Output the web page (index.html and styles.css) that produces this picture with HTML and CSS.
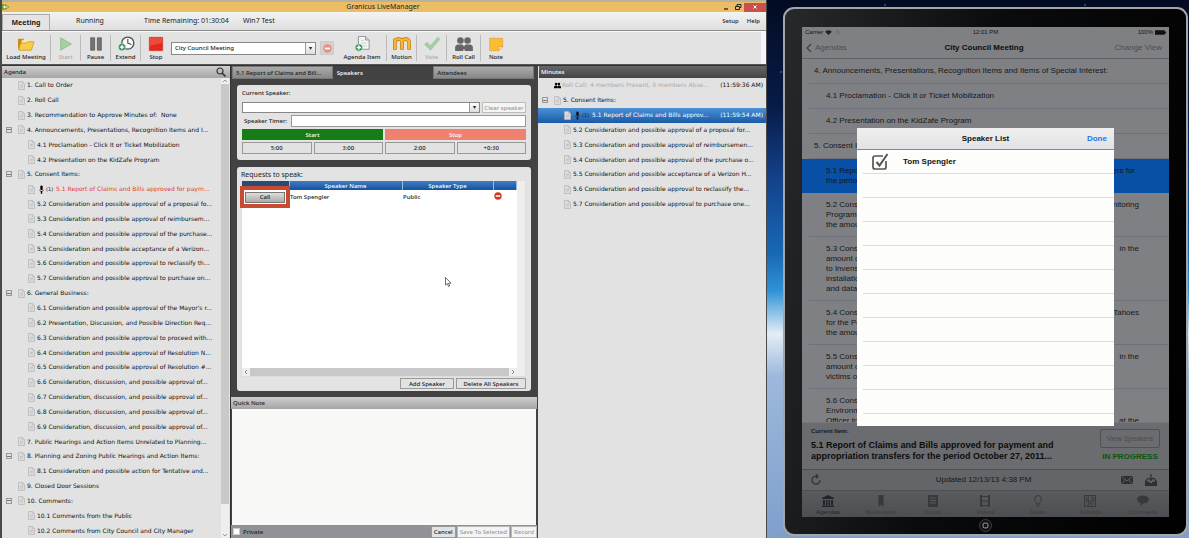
FILE: index.html
```html
<!DOCTYPE html>
<html lang="en">
<head>
<meta charset="utf-8">
<title>Granicus LiveManager</title>
<link rel="stylesheet" href="styles.css">
</head>
<body>
<svg class="defs" aria-hidden="true">
  <symbol id="doc" viewBox="0 0 7 9"><path d="M.5.5h4l2 2v6h-6z" fill="#dcdcdc" stroke="#b4b4b4" stroke-width=".7"/><path d="M4.300.6v2.200h2M2 4.500h3M2 6h3" fill="none" stroke="#b4b4b4" stroke-width=".6"/></symbol>
  <symbol id="mic" viewBox="0 0 5 9"><rect x="1.300" y=".5" width="2.400" height="4.600" rx="1.200"/><path d="M.3 3.800c0 3 4.400 3 4.400 0v1.500L3.200 6.800v1.900H1.800V6.800L.3 5.300z"/></symbol>
  <symbol id="people" viewBox="0 0 20 18"><circle cx="6" cy="5" r="3.700"/><circle cx="14" cy="5" r="3.700"/><path d="M0 17v-4c0-3 3-3.400 4-3.400h4l2 2 2-2h4c1 0 4 .4 4 3.400v4h-9l-1-3-1 3z"/></symbol>
  <symbol id="minus" viewBox="0 0 8 8"><circle cx="4" cy="4" r="3.700"/><path d="M1.800 3.200h4.400v1.600H1.800z" fill="#fff"/></symbol>
  <symbol id="plus" viewBox="0 0 8 8"><circle cx="4" cy="4" r="3.600" fill="#2c8a55" stroke="#e6f2ea" stroke-width=".5"/><path d="M4 1.800v4.400M1.800 4h4.400" stroke="#fff" stroke-width="1.400"/></symbol>
</svg>

<main class="desktop">
  <section class="window">
    <header class="titlebar">
      <svg class="logo" viewBox="0 0 8 8"><path d="M0 1l4 .5L7.500 4 4 6.500 0 7z" fill="#7aa52a"/><path d="M1 4l2-1.500v1h2.500v1H3v1z" fill="#fff"/></svg>
      <h1>Granicus LiveManager</h1>
      <div class="winbtns">
        <button aria-label="Minimize"><svg viewBox="0 0 8 8"><path d="M2 6h4" stroke="#222" stroke-width="1.300"/></svg></button>
        <button aria-label="Restore"><svg viewBox="0 0 8 8"><path d="M1.500 3.500h4v3h-4zM3 3V1.500h4v3H5.800" fill="none" stroke="#222"/></svg></button>
        <button class="close" aria-label="Close"><svg viewBox="0 0 8 8"><path d="M2.500 2.500l3 3m0-3l-3 3" stroke="#fff"/></svg></button>
      </div>
    </header>

    <nav class="menubar">
      <button class="mtab active">Meeting</button>
      <button class="mtab">Running</button>
      <span class="remaining">Time Remaining: 01:30:04</span>
      <span class="host">Win7 Test</span>
      <a href="#">Setup</a><a href="#">Help</a>
    </nav>

    <div class="toolbar">
      <button class="tool wide"><svg viewBox="0 0 20 18"><path d="M1 3h6l1 2h8v4H4L1 16z" fill="#c98d15"/><path d="M5 5l11-2v5H5z" fill="#f7e9b8"/><path d="M4 8h6l2-1.500h7L16 16H2z" fill="#f9cd45" stroke="#c88f18" stroke-width=".8"/></svg>Load Meeting</button>
      <button class="tool off"><svg viewBox="0 0 20 18"><path d="M4 2l12 7-12 7z" fill="#a5d0a4" stroke="#8dbd8c"/></svg>Start</button>
      <button class="tool"><svg viewBox="0 0 20 18"><path d="M4 2h4.500v14H4zM11.500 2H16v14h-4.500z" fill="#737373" stroke="#555" stroke-width=".8"/></svg>Pause</button>
      <button class="tool"><svg viewBox="0 0 20 18"><circle cx="12" cy="8" r="6.800" fill="#f7faf7" stroke="#455349" stroke-width="1.500"/><path d="M12 3.500V8l4 1.500" fill="none" stroke="#455349" stroke-width="1.200"/><use href="#plus" x="1" y="8" width="9" height="9"/></svg>Extend</button>
      <button class="tool nosep"><svg viewBox="0 0 20 18"><path d="M2.500 1.500h15v15h-15z" fill="#e3281c" stroke="#c93a30" stroke-width=".8"/><path d="M3 2h14v6L3 11z" fill="#ee4a3c"/></svg>Stop</button>
      <div class="combo meeting"><select aria-label="Meeting"><option>City Council Meeting</option></select></div>
      <button class="remove" aria-label="Remove meeting"><svg viewBox="0 0 8 8"><use href="#minus" fill="#e58d84"/></svg></button>
      <button class="tool wide"><svg viewBox="0 0 20 18"><path d="M6 .5h8l4 4V15H6z" fill="#f4f4f4" stroke="#8c8c8c"/><path d="M14 .5v4h4" fill="#d5d5d5" stroke="#8c8c8c"/><path d="M9 5h3M9 8h6M9 11h6" stroke="#ccc"/><use href="#plus" x="2" y="8.500" width="9" height="9"/></svg>Agenda Item</button>
      <button class="tool"><svg viewBox="0 0 20 18"><path d="M2 15.500V3M2 6q.5-2.500 4-2.500Q10 3.500 10 7v8.500M10 7q.3-3.500 4-3.500T18 7v8.500" fill="none" stroke="#b9740e" stroke-width="4"/><path d="M2 15V3.500M2 6q.5-2.500 4-2.500Q10 3.500 10 7v8M10 7q.3-3.500 4-3.500T18 7v8" fill="none" stroke="#fab52c" stroke-width="2.600"/></svg>Motion</button>
      <button class="tool off"><svg viewBox="0 0 20 18"><path d="M1.500 9.500L4.500 7l3.500 4 8.500-9.500L19 3.500 8.500 16z" fill="#a4cfa5" stroke="#90c091" stroke-width=".6"/></svg>Vote</button>
      <button class="tool roomy"><svg viewBox="0 0 20 18" fill="#666"><use href="#people"/></svg>Roll Call</button>
      <button class="tool nosep"><svg viewBox="0 0 20 18"><path d="M3 2.500h14.500V12L13 16.500H3z" fill="#fbbd35" stroke="#e39d20" stroke-width=".7"/><path d="M17.500 12H13v4.500z" fill="#fff0b0" stroke="#d28c1c" stroke-width=".6"/></svg>Note</button>
      <div class="overflow"></div>
    </div>

    <div class="columns">
      <section class="agenda">
        <h2 class="bar light">Agenda <svg class="find" viewBox="0 0 10 10"><circle cx="4" cy="4" r="3" fill="none" stroke="#333" stroke-width="1.200"/><path d="M6.200 6.200L9.500 9.500" stroke="#333" stroke-width="1.600"/></svg></h2>
        <div class="scrollarea">
          <ul class="tree">
            <li><svg><use href="#doc"/></svg><span>1. Call to Order</span></li>
            <li><svg><use href="#doc"/></svg><span>2. Roll Call</span></li>
            <li><svg><use href="#doc"/></svg><span>3. Recommendation to Approve Minutes of: &nbsp;None</span></li>
            <li class="open"><svg><use href="#doc"/></svg><span>4. Announcements, Presentations, Recognition Items and I...</span></li>
            <li class="sub"><svg><use href="#doc"/></svg><span>4.1 Proclamation - Click It or Ticket Mobilization</span></li>
            <li class="sub"><svg><use href="#doc"/></svg><span>4.2 Presentation on the KidZafe Program</span></li>
            <li class="open"><svg><use href="#doc"/></svg><span>5. Consent Items:</span></li>
            <li class="sub live"><svg><use href="#doc"/></svg><svg class="mic"><use href="#mic"/></svg><small>(1)</small><span>5.1 Report of Claims and Bills approved for paym...</span></li>
            <li class="sub"><svg><use href="#doc"/></svg><span>5.2 Consideration and possible approval of a proposal fo...</span></li>
            <li class="sub"><svg><use href="#doc"/></svg><span>5.3 Consideration and possible approval of reimbursem...</span></li>
            <li class="sub"><svg><use href="#doc"/></svg><span>5.4 Consideration and possible approval of the purchase...</span></li>
            <li class="sub"><svg><use href="#doc"/></svg><span>5.5 Consideration and possible acceptance of a Verizon...</span></li>
            <li class="sub"><svg><use href="#doc"/></svg><span>5.6 Consideration and possible approval to reclassify th...</span></li>
            <li class="sub"><svg><use href="#doc"/></svg><span>5.7 Consideration and possible approval to purchase on...</span></li>
            <li class="open"><svg><use href="#doc"/></svg><span>6. General Business:</span></li>
            <li class="sub"><svg><use href="#doc"/></svg><span>6.1 Consideration and possible approval of the Mayor's r...</span></li>
            <li class="sub"><svg><use href="#doc"/></svg><span>6.2 Presentation, Discussion, and Possible Direction Req...</span></li>
            <li class="sub"><svg><use href="#doc"/></svg><span>6.3 Consideration and possible approval to proceed with...</span></li>
            <li class="sub"><svg><use href="#doc"/></svg><span>6.4 Consideration and possible approval of Resolution N...</span></li>
            <li class="sub"><svg><use href="#doc"/></svg><span>6.5 Consideration and possible approval of Resolution #...</span></li>
            <li class="sub"><svg><use href="#doc"/></svg><span>6.6 Consideration, discussion, and possible approval of...</span></li>
            <li class="sub"><svg><use href="#doc"/></svg><span>6.7 Consideration, discussion, and possible approval of...</span></li>
            <li class="sub"><svg><use href="#doc"/></svg><span>6.8 Consideration, discussion, and possible approval of...</span></li>
            <li class="sub"><svg><use href="#doc"/></svg><span>6.9 Consideration, discussion, and possible approval of...</span></li>
            <li><svg><use href="#doc"/></svg><span>7. Public Hearings and Action Items Unrelated to Planning...</span></li>
            <li class="open"><svg><use href="#doc"/></svg><span>8. Planning and Zoning Public Hearings and Action Items:</span></li>
            <li class="sub"><svg><use href="#doc"/></svg><span>8.1 Consideration and possible action for Tentative and...</span></li>
            <li><svg><use href="#doc"/></svg><span>9. Closed Door Sessions</span></li>
            <li class="open"><svg><use href="#doc"/></svg><span>10. Comments:</span></li>
            <li class="sub"><svg><use href="#doc"/></svg><span>10.1 Comments from the Public</span></li>
            <li class="sub"><svg><use href="#doc"/></svg><span>10.2 Comments from City Council and City Manager</span></li>
          </ul>
          <div class="vscroll"><svg viewBox="0 0 8 6"><path d="M2 4l2-2 2 2" fill="none" stroke="#999"/></svg><i></i><svg class="down" viewBox="0 0 8 6"><path d="M2 2l2 2 2-2" fill="none" stroke="#999"/></svg></div>
        </div>
      </section>

      <section class="middle">
        <div class="tabs">
          <button>5.1 Report of Claims and Bill...</button>
          <button class="active">Speakers</button>
          <button>Attendees</button>
        </div>
        <div class="panels">
          <form class="panel speaker">
            <label for="current">Current Speaker:</label>
            <div class="line">
              <div class="combo"><select id="current"><option></option></select></div>
              <button type="button" class="btn faded">Clear speaker</button>
            </div>
            <div class="line timer"><label for="timer">Speaker Timer:</label><input id="timer" type="text"></div>
            <div class="halves"><button type="button" class="go">Start</button><button type="button" class="halt">Stop</button></div>
            <div class="quarters"><button type="button" class="btn">5:00</button><button type="button" class="btn">3:00</button><button type="button" class="btn">2:00</button><button type="button" class="btn">+0:30</button></div>
          </form>
          <div class="panel requests">
            <h3>Requests to speak:</h3>
            <div class="grid">
              <div class="sheet">
                <table>
                  <colgroup><col class="c1"><col class="c2"><col class="c3"><col></colgroup>
                  <thead><tr><th></th><th>Speaker Name</th><th>Speaker Type</th><th></th></tr></thead>
                  <tbody><tr><td class="callcell"><button class="call">Call</button></td><td>Tom Spengler</td><td>Public</td><td class="del"><button aria-label="Remove Tom Spengler"><svg viewBox="0 0 8 8"><use href="#minus" fill="#d8351f"/></svg></button></td></tr></tbody>
                </table>
                <div class="hscroll"><svg viewBox="0 0 8 8"><path d="M5 2L3 4l2 2" fill="none" stroke="#888"/></svg><i></i><svg viewBox="0 0 8 8"><path d="M3 2l2 2-2 2" fill="none" stroke="#888"/></svg></div>
              </div>
              <div class="rail"></div>
            </div>
            <div class="actions"><button class="btn add">Add Speaker</button><button class="btn all">Delete All Speakers</button></div>
          </div>
        </div>
        <h2 class="bar light"><label for="note">Quick Note</label></h2>
        <textarea id="note"></textarea>
        <footer class="notebar">
          <input type="checkbox" id="private"><label for="private">Private</label>
          <button class="btn">Cancel</button><button class="btn faded">Save To Selected</button><button class="btn faded">Record</button>
        </footer>
        <svg class="cursor" viewBox="0 0 7 10"><path d="M.5.5v7.500l1.800-1.500 1.200 3 1.200-.5-1.200-2.800H6z" fill="#fff" stroke="#333" stroke-width=".7"/></svg>
      </section>

      <section class="minutes">
        <h2 class="bar dark">Minutes</h2>
        <ul class="tree">
          <li class="roll"><svg><use href="#people"/></svg><span>Roll Call: 4 members Present, 0 members Abse...</span><time>(11:59:36 AM)</time></li>
          <li class="open"><svg><use href="#doc"/></svg><span>5. Consent Items:</span></li>
          <li class="sub selected"><svg><use href="#doc"/></svg><svg class="mic"><use href="#mic"/></svg><small>(1)</small><span>5.1 Report of Claims and Bills approv...</span><time>(11:59:54 AM)</time></li>
          <li class="sub"><svg><use href="#doc"/></svg><span>5.2 Consideration and possible approval of a proposal for...</span></li>
          <li class="sub"><svg><use href="#doc"/></svg><span>5.3 Consideration and possible approval of reimbursemen...</span></li>
          <li class="sub"><svg><use href="#doc"/></svg><span>5.4 Consideration and possible approval of the purchase o...</span></li>
          <li class="sub"><svg><use href="#doc"/></svg><span>5.5 Consideration and possible acceptance of a Verizon H...</span></li>
          <li class="sub"><svg><use href="#doc"/></svg><span>5.6 Consideration and possible approval to reclassify the...</span></li>
          <li class="sub"><svg><use href="#doc"/></svg><span>5.7 Consideration and possible approval to purchase one...</span></li>
        </ul>
      </section>
    </div>
  </section>

  <section class="space">
    <div class="tablet">
      <div class="screen">
        <div class="status">
          <span class="carrier">Carrier <svg viewBox="0 0 8 6"><path d="M0 2q4-3.500 8 0L4 6z" fill="#222"/></svg><svg viewBox="0 0 6 6"><circle cx="3" cy="3" r="2" fill="none" stroke="#555" stroke-dasharray="1 1"/></svg></span>
          <span>12:01 PM</span>
          <span class="power">100% <svg viewBox="0 0 12 5"><path d="M0 0h10.500v1.500H12v2h-1.500V5H0z" fill="#111"/></svg></span>
        </div>
        <div class="nav"><button class="back"><svg viewBox="0 0 6 10"><path d="M5 1L1 5l4 4" fill="none" stroke="#3f4044" stroke-width="1.300"/></svg>Agendas</button><strong>City Council Meeting</strong><button class="view">Change View</button></div>
        <ul class="items">
          <li class="top">4. Announcements, Presentations, Recognition Items and Items of Special Interest:</li>
          <li>4.1 Proclamation - Click It or Ticket Mobilization</li>
          <li>4.2 Presentation on the KidZafe Program</li>
          <li class="top">5. Consent Items:</li>
          <li class="current"><p><span>5.1 Report of Claims</span><span>transfers for</span></p><p>the period</p></li>
          <li><p><span>5.2 Consideration</span><span>Monitoring</span></p><p>Program in</p><p>the amount</p></li>
          <li><p><span>5.3 Consideration</span><span>in the</span></p><p>amount of</p><p>to Invensys</p><p>installation</p><p>and data</p></li>
          <li><p><span>5.4 Consideration</span><span>Tahoes</span></p><p>for the Police</p><p>the amount</p></li>
          <li><p><span>5.5 Consideration</span><span>in the</span></p><p>amount of</p><p>victims of</p></li>
          <li><p><span>5.6 Consideration</span></p><p>Environmental</p><p><span>Officer to</span><span>at the</span></p></li>
        </ul>
        <div class="now">
          <div class="what"><small>Current Item:</small><strong>5.1 Report of Claims and Bills approved for payment and appropriation transfers for the period October 27, 2011...</strong></div>
          <div class="state"><button>View Speakers</button><b>IN PROGRESS</b></div>
        </div>
        <div class="sync">
          <button aria-label="Refresh"><svg viewBox="0 0 12 12"><path d="M10 6a4 4 0 1 1-3-3.800M6 0l2 2.200L6 4.500" fill="none" stroke="#303134" stroke-width="1.200"/></svg></button>
          <span>Updated 12/13/13 4:38 PM</span>
          <div><button aria-label="Mail"><svg viewBox="0 0 12 12"><path d="M0 2h12v8H0z" fill="#2e2f32"/><path d="M.5 2.500L6 7l5.500-4.500M.5 9.500l4-3.500m7 3.500l-4-3.500" fill="none" stroke="#6a6b6e" stroke-width=".8"/></svg></button><button aria-label="Download"><svg viewBox="0 0 12 12"><path d="M0 7l2.500-3H4v1H3L1.500 7.500H4l1 1.500h2l1-1.500h2.500L9 5H8V4h1.500L12 7v5H0z" fill="#2e2f32"/><path d="M6 0v6M3.800 4L6 6.300 8.200 4" fill="none" stroke="#2e2f32" stroke-width="1.200"/></svg></button></div>
        </div>
        <nav class="tabbar">
          <a href="#" class="on"><svg viewBox="0 0 12 12"><path d="M6 0l6 3v1H0V3zM1 5h2v5H1zM4 5h1.500v5H4zM6.500 5H8v5H6.500zM9 5h2v5H9zM0 10.500h12V12H0z"/></svg>Agendas</a>
          <a href="#"><svg viewBox="0 0 12 12"><path d="M3.500 0h5v12L6 9.500 3.500 12z"/></svg>Bookmarks</a>
          <a href="#"><svg viewBox="0 0 12 12"><path d="M1 0h10v12H1z"/><path d="M3 3h6M3 5.500h6M3 8h6" stroke="#5a5b5e"/></svg>Notes</a>
          <a href="#"><svg viewBox="0 0 12 12"><path d="M1 0h2v12H1zM9 0h2v12H9zM3 1h6v1H3zM3 5.500h6v1H3zM3 10h6v1H3z"/></svg>Videos</a>
          <a href="#"><svg viewBox="0 0 12 12"><path d="M4.500 9C4.500 7 2.500 6.500 2.500 4a3.500 3.500 0 0 1 7 0c0 2.500-2 3-2 5zM4.500 11h3" fill="none" stroke="#38393c"/></svg>Ideas</a>
          <a href="#"><svg viewBox="0 0 12 12"><path d="M.5.5h11v11H.5zM4.200 1v10M8 1v10" fill="none" stroke="#38393c"/><path d="M2 2h1v5H2zM5.500 5h1v5h-1zM9.300 2h1v5h-1z"/></svg>Settings</a>
          <a href="#"><svg viewBox="0 0 12 12"><ellipse cx="6" cy="4.500" rx="6" ry="4"/><path d="M4 8l-1 3 4-3z"/></svg>Comments</a>
        </nav>
        <div class="dialog" role="dialog" aria-label="Speaker List">
          <header><strong>Speaker List</strong><button>Done</button></header>
          <ul>
            <li><label><input type="checkbox" checked><svg viewBox="0 0 18 18"><path d="M12 3H4Q2 3 2 5v9q0 2 2 2h9q2 0 2-2V8" fill="none" stroke="#555" stroke-width="1.700"/><path d="M5.500 9l3 3.500L16.500 1" fill="none" stroke="#555" stroke-width="2"/></svg>Tom Spengler</label></li>
            <li></li><li></li><li></li><li></li><li></li><li></li><li></li><li></li><li></li><li></li>
          </ul>
        </div>
      </div>
      <button class="home" aria-label="Home"><svg viewBox="0 0 12 12"><circle cx="6" cy="6" r="5.500" fill="#111" stroke="#555" stroke-width=".7"/><rect x="3.800" y="3.800" width="4.400" height="4.400" rx="1" fill="none" stroke="#aaa" stroke-width=".9"/></svg></button>
    </div>
  </section>
</main>
</body>
</html>
```
FILE: styles.css
```css
*, *::before, *::after { box-sizing: border-box; }
body, h1, h2, h3, ul, p { margin: 0; padding: 0; }
ul { list-style: none; }
body { font: 500 6px/8px "Noto Sans", sans-serif; color: #222; }
button, input, select, textarea { font: inherit; color: inherit; margin: 0; padding: 0; border: 0; border-radius: 0; background: none; }
a { color: inherit; text-decoration: none; }
h1, h2, h3 { font: inherit; }
svg { display: block; flex: none; }
.defs { position: absolute; width: 0; height: 0; }

.desktop { display: grid; grid-template-columns: 767fr 422fr; height: 100vh; min-height: 538px; overflow: hidden; background: #06102c; }
.window { display: flex; flex-direction: column; min-width: 0; min-height: 0; padding: 0 1px 0 2px; background: #4a4a4a; }

.titlebar { display: flex; align-items: center; height: 12px; flex: none; border-top: 2px solid #b7b29f; background: #edbd65; }
.logo { width: 8px; height: 8px; }
.titlebar h1 { flex: 1; padding-left: 36px; text-align: center; font-size: 7px; font-weight: 400; }
.winbtns { display: flex; }
.winbtns button { display: grid; place-items: center; width: 12px; height: 9px; }
.winbtns .close { width: 22px; background: #cb4f4c; }
.winbtns svg { width: 8px; height: 8px; }

.menubar { display: flex; align-items: center; height: 19px; flex: none; background: linear-gradient(#f3f3f3, #dedede); border-bottom: 1px solid #8b8b8b; font-size: 7px; font-weight: 400; }
.mtab { width: 48px; align-self: stretch; }
.mtab.active { margin-top: 2px; font-weight: 700; border: 1px solid #aaa; border-bottom: 0; background: #e4e4e4; }
.mtab + .mtab { width: 80px; }
.remaining { width: 99px; margin-left: 14px; }
.host { flex: 1; }
.menubar a { margin-right: 8px; font-size: 6px; font-weight: 500; }
.menubar a:last-child { margin-right: 6px; }

.toolbar { display: flex; align-items: center; height: 34px; flex: none; background: #e3e3e3; border-top: 1px solid #f8f8f8; border-bottom: 1px solid #555; }
.tool { display: flex; flex-direction: column; align-items: center; justify-content: center; gap: 1px; width: 30px; height: 26px; border-right: 1px solid #bbb; white-space: nowrap; }
.tool.wide { width: 49px; }
.tool.roomy { width: 34px; }
.tool.nosep { border-right: 0; }
.tool.off { color: #aaa; }
.tool svg { width: 18px; height: 16px; }
.combo { position: relative; display: flex; height: 13px; border: 1px solid #888; background: #fff; }
.combo select { flex: 1; min-width: 0; padding-left: 3px; appearance: none; outline: 0; }
.combo::after { content: "▾"; position: absolute; right: 0; top: 0; bottom: 0; width: 10px; border-left: 1px solid #999; background: linear-gradient(#fff, #ddd); color: #222; text-align: center; line-height: 11px; pointer-events: none; }
.meeting { width: 145px; }
.remove { display: grid; place-items: center; width: 14px; height: 14px; margin: 0 4px; border: 1px solid #ccc; background: #d5d0d0; }
.remove svg { width: 9px; height: 9px; }
.overflow { align-self: stretch; width: 5px; margin-left: auto; background: #f2f6fb; }

.columns { flex: 1; min-height: 0; display: grid; grid-template-columns: 228fr 308fr 228fr; border-top: 1px solid #333; }
.bar { display: flex; align-items: center; justify-content: space-between; height: 12px; flex: none; padding: 0 2px; }
.bar.light { background: linear-gradient(#cfcfcf, #a5a5a5); }
.bar.dark { background: linear-gradient(#666, #444); color: #fff; }
.find { width: 10px; height: 10px; margin-right: 2px; }

.agenda, .minutes { display: flex; flex-direction: column; min-width: 0; min-height: 0; background: #e2e2e2; }
.scrollarea { display: flex; flex: 1; min-height: 0; }
.tree { flex: 1; min-width: 0; min-height: 0; display: grid; grid-template-rows: repeat(31, minmax(0, 1fr)); font-family: "DejaVu Sans", Verdana, sans-serif; font-weight: 400; color: #111; }
.tree li { display: flex; align-items: center; padding-left: 16px; white-space: nowrap; overflow: hidden; }
.tree li.sub { padding-left: 26px; }
.tree svg { width: 7px; height: 9px; margin-right: 2px; }
.tree .mic { width: 5px; margin-left: 2px; }
.tree small { font-size: 5px; margin-right: 3px; }
.tree .open { padding-left: 4px; }
.tree .open::before { content: ""; width: 6px; height: 6px; margin-right: 6px; flex: none; border: 1px solid #999; background: linear-gradient(#777, #777) center / 100% 1px no-repeat; }
.live span { color: #e23a33; }
.vscroll { display: flex; flex-direction: column; width: 8px; margin-right: 1px; background: #eee; }
.vscroll i { flex: 1; background: #c9c9c9; }
.vscroll svg { width: 8px; height: 6px; }
.vscroll .down { margin-top: 28px; }

.minutes .bar { margin-left: 1px; }
.minutes .roll svg { margin-right: 1px; }
.minutes .roll span { color: #aaa; }
.minutes time { margin-left: auto; padding-right: 3px; }
.minutes .selected { background: linear-gradient(#4a90d6, #1a5ba8); color: #fff; }
.selected small { color: #123; }
.selected .mic { fill: #111; }

.middle { position: relative; display: flex; flex-direction: column; min-width: 0; min-height: 0; background: #424242; border-left: 1px solid #333; border-right: 1px solid #444; }
.tabs { display: grid; grid-template-columns: repeat(3, 1fr); height: 13px; flex: none; padding: 0 3px 0 1px; }
.tabs button { padding-left: 3px; text-align: left; border: 1px solid #777; background: linear-gradient(#aaa, #888); white-space: nowrap; }
.tabs .active { border-color: #424242; background: #424242; color: #fff; }
.panels { flex: 1; min-height: 0; display: flex; flex-direction: column; gap: 7px; padding: 6px 6px; }
.panel { display: flex; flex-direction: column; padding: 4px 5px; border-radius: 3px; background: #e3e3e3; }
.speaker { height: 75px; gap: 2px; }
.line { display: flex; gap: 2px; }
.line .combo { flex: 1; height: 11px; }
.line .combo::after { line-height: 9px; }
.btn { height: 12px; padding: 0 3px; border: 1px solid #999; background: #e2e2e2; white-space: nowrap; }
.btn.faded { color: #999; border-color: #bbb; background: #f4f4f4; }
.line .btn { width: 44px; height: 11px; padding: 0; }
.speaker > label { height: 11px; }
.timer { padding-left: 2px; gap: 4px; align-items: center; }
.timer input { flex: 1; min-width: 0; height: 12px; border: 1px solid #999; background: #fff; }
.halves { display: grid; grid-template-columns: 1fr 1fr; gap: 2px; color: #fff; }
.halves button { height: 11px; }
.go { background: #167d16; }
.halt { background: #f0816f; }
.quarters { display: grid; grid-template-columns: repeat(4, 1fr); gap: 2px; }
.requests { flex: 1; min-height: 0; padding: 4px 5px 2px 4px; }
.requests h3 { font-size: 7px; height: 10px; line-height: 8px; font-weight: 400; }
.grid { flex: 1; min-height: 0; display: flex; background: #fff; border: 1px solid #ddd; border-top: 0; }
.sheet { flex: 1; display: flex; flex-direction: column; justify-content: space-between; }
.rail { width: 8px; background: #eee; }
table { width: 100%; table-layout: fixed; border-collapse: collapse; }
col.c1 { width: 47px; } col.c2 { width: 113px; } col.c3 { width: 91px; }
th { height: 9px; padding: 0; border-right: 1px solid #9ab8dc; background: linear-gradient(#3d7dc4, #16529d); color: #fff; font-weight: 500; line-height: 8px; }
th:first-child { background: #2b4b74; }
td { height: 14px; padding: 0 1px; }
.callcell { position: relative; }
.callcell::after { content: ""; position: absolute; inset: -4px -1px -4px -2px; border: 4px solid #c84a30; pointer-events: none; }
.call { display: block; width: 40px; height: 11px; margin-left: 2px; border: 1px solid #777; background: linear-gradient(#ddd, #aaa); }
.del svg { width: 8px; height: 8px; }
.hscroll { display: flex; height: 8px; background: #eee; }
.hscroll i { flex: 1; background: #c8c8c8; }
.hscroll svg { width: 8px; height: 8px; }
.actions { display: flex; justify-content: flex-end; gap: 2px; padding-top: 1px; }
.actions .btn { height: 11px; }
.btn.add { width: 54px; } .btn.all { width: 70px; }
textarea { height: 116px; flex: none; margin: 0 1px; resize: none; background: #f8f8f7; }
.notebar { display: flex; align-items: center; gap: 1px; height: 13px; flex: none; padding-left: 2px; background: #929296; }
.notebar input { appearance: none; width: 7px; height: 7px; border: 1px solid #ccc; background: #fff; }
.notebar label { flex: 1; padding-left: 2px; }
.notebar .btn { padding: 0 2px; }
.cursor { position: absolute; left: 70%; top: 211px; width: 7px; height: 10px; }

.space { display: flex; padding: 7px 1px 2px 16px; min-height: 0; font-family: "Liberation Sans", Arial, sans-serif; font-weight: 400; color: #161719; background:
  radial-gradient(1px 1px at 118px 5px, #9bf, transparent), radial-gradient(1px 1px at 318px 5px, #9bf, transparent), radial-gradient(1px 1px at 14px 72px, #9bf, transparent),
  linear-gradient(#030b22 0, #081c48 20%, #14418a 33%, #1868b4 47%, #2f92d6 54%, #e2edf4 62%, #9cb8dc 70%, #7f9fcb 100%); }
.tablet { flex: 1; min-width: 0; display: flex; flex-direction: column; padding: 18px 17px 0; border: 2px solid #a4a6ab; border-radius: 11px; background: linear-gradient(100deg, #28292b, #0a0b0c 45%, #000); }
.screen { position: relative; flex: 1; min-height: 0; display: flex; flex-direction: column; background: #7f8083; }
.home { display: grid; place-items: center; height: 17px; flex: none; }
.home svg { width: 13px; height: 13px; }
.status { display: grid; grid-template-columns: 1fr auto 1fr; align-items: center; height: 10px; padding: 0 3px; }
.status svg { width: 7px; height: 5px; }
.status .carrier, .status .power { display: flex; align-items: center; gap: 2px; }
.status .power { justify-content: flex-end; }
.status .power svg { width: 11px; }
.nav { display: grid; grid-template-columns: 1fr auto 1fr; align-items: center; height: 22px; padding: 0 7px 0 4px; border-bottom: 1px solid #616267; font-size: 8px; line-height: 10px; }
.nav strong { color: #0c0c0d; }
.nav button { color: #4c4d51; }
.back { display: flex; align-items: center; gap: 3px; }
.back svg { width: 6px; height: 10px; }
.view { justify-self: end; }
.items { flex: 1; min-height: 0; overflow: hidden; font-size: 8px; line-height: 10px; }
.items li { padding: 7px 0 6px 17px; margin-left: 7px; border-bottom: 1px solid #6d6f7a; white-space: nowrap; }
.items li:nth-child(-n+4) { padding: 7px 0; }
.items li:nth-child(-n+4):not(.top) { padding-left: 17px; }
.items li.top { padding-left: 5px; }
.items li.current { margin-left: 0; padding: 7px 0 7px 24px; border: 0; background: #0750a6; }
.items p { display: flex; justify-content: space-between; width: 313px; }
.items .current p { width: 309px; }
.now { display: flex; justify-content: space-between; height: 47px; padding: 4px 9px; background: #6b6c6f; border-top: 1px solid #77787c; }
.what { display: flex; flex-direction: column; gap: 5px; width: 258px; font-size: 9px; line-height: 11px; }
.what strong { color: #0c0c0d; }
.what small { font-size: 6px; line-height: 8px; font-weight: 700; }
.state { display: flex; flex-direction: column; align-items: center; gap: 4px; padding-top: 2px; }
.state button { width: 60px; height: 19px; border: 1px solid #505155; border-radius: 2px; color: #4a4b4f; font-size: 7px; }
.state b { color: #06570e; font-size: 8px; line-height: 10px; white-space: nowrap; }
.sync { display: grid; grid-template-columns: 1fr auto 1fr; align-items: center; height: 22px; padding: 0 12px 0 8px; border-top: 1px solid #4f5053; border-bottom: 1px solid #4f5053; background: #646568; font-size: 8px; }
.sync svg { width: 12px; height: 12px; }
.sync div { display: flex; gap: 12px; justify-content: flex-end; }
.tabbar { display: grid; grid-template-columns: repeat(7, 1fr); height: 26px; background: linear-gradient(#5a5b5e, #4d4e51); color: #3c3d40; fill: #38393c; }
.tabbar a { display: flex; flex-direction: column; align-items: center; gap: 1px; padding-top: 4px; }
.tabbar svg { width: 12px; height: 12px; }
.tabbar .on { color: #26272a; fill: #222326; }

.dialog { position: absolute; left: 15%; right: 15%; top: 101px; height: 298px; background: #fdfdfc; color: #111; font-size: 8px; }
.dialog header { display: grid; grid-template-columns: 1fr auto 1fr; align-items: center; height: 22px; padding: 0 7px; border-bottom: 1px solid #888; background: linear-gradient(#efefef, #e2e2e4); }
.dialog header strong { grid-column: 2; }
.dialog header button { justify-self: end; color: #1a78e8; font-weight: 700; }
.dialog ul { padding-left: 6px; }
.dialog li { height: 24px; border-bottom: 1px solid #dcdcdc; }
.dialog label { position: relative; display: flex; align-items: center; gap: 14px; height: 23px; padding-left: 8px; font-weight: 700; }
.dialog label svg { width: 18px; height: 18px; }
.dialog input { position: absolute; width: 18px; height: 18px; opacity: 0; }
```
